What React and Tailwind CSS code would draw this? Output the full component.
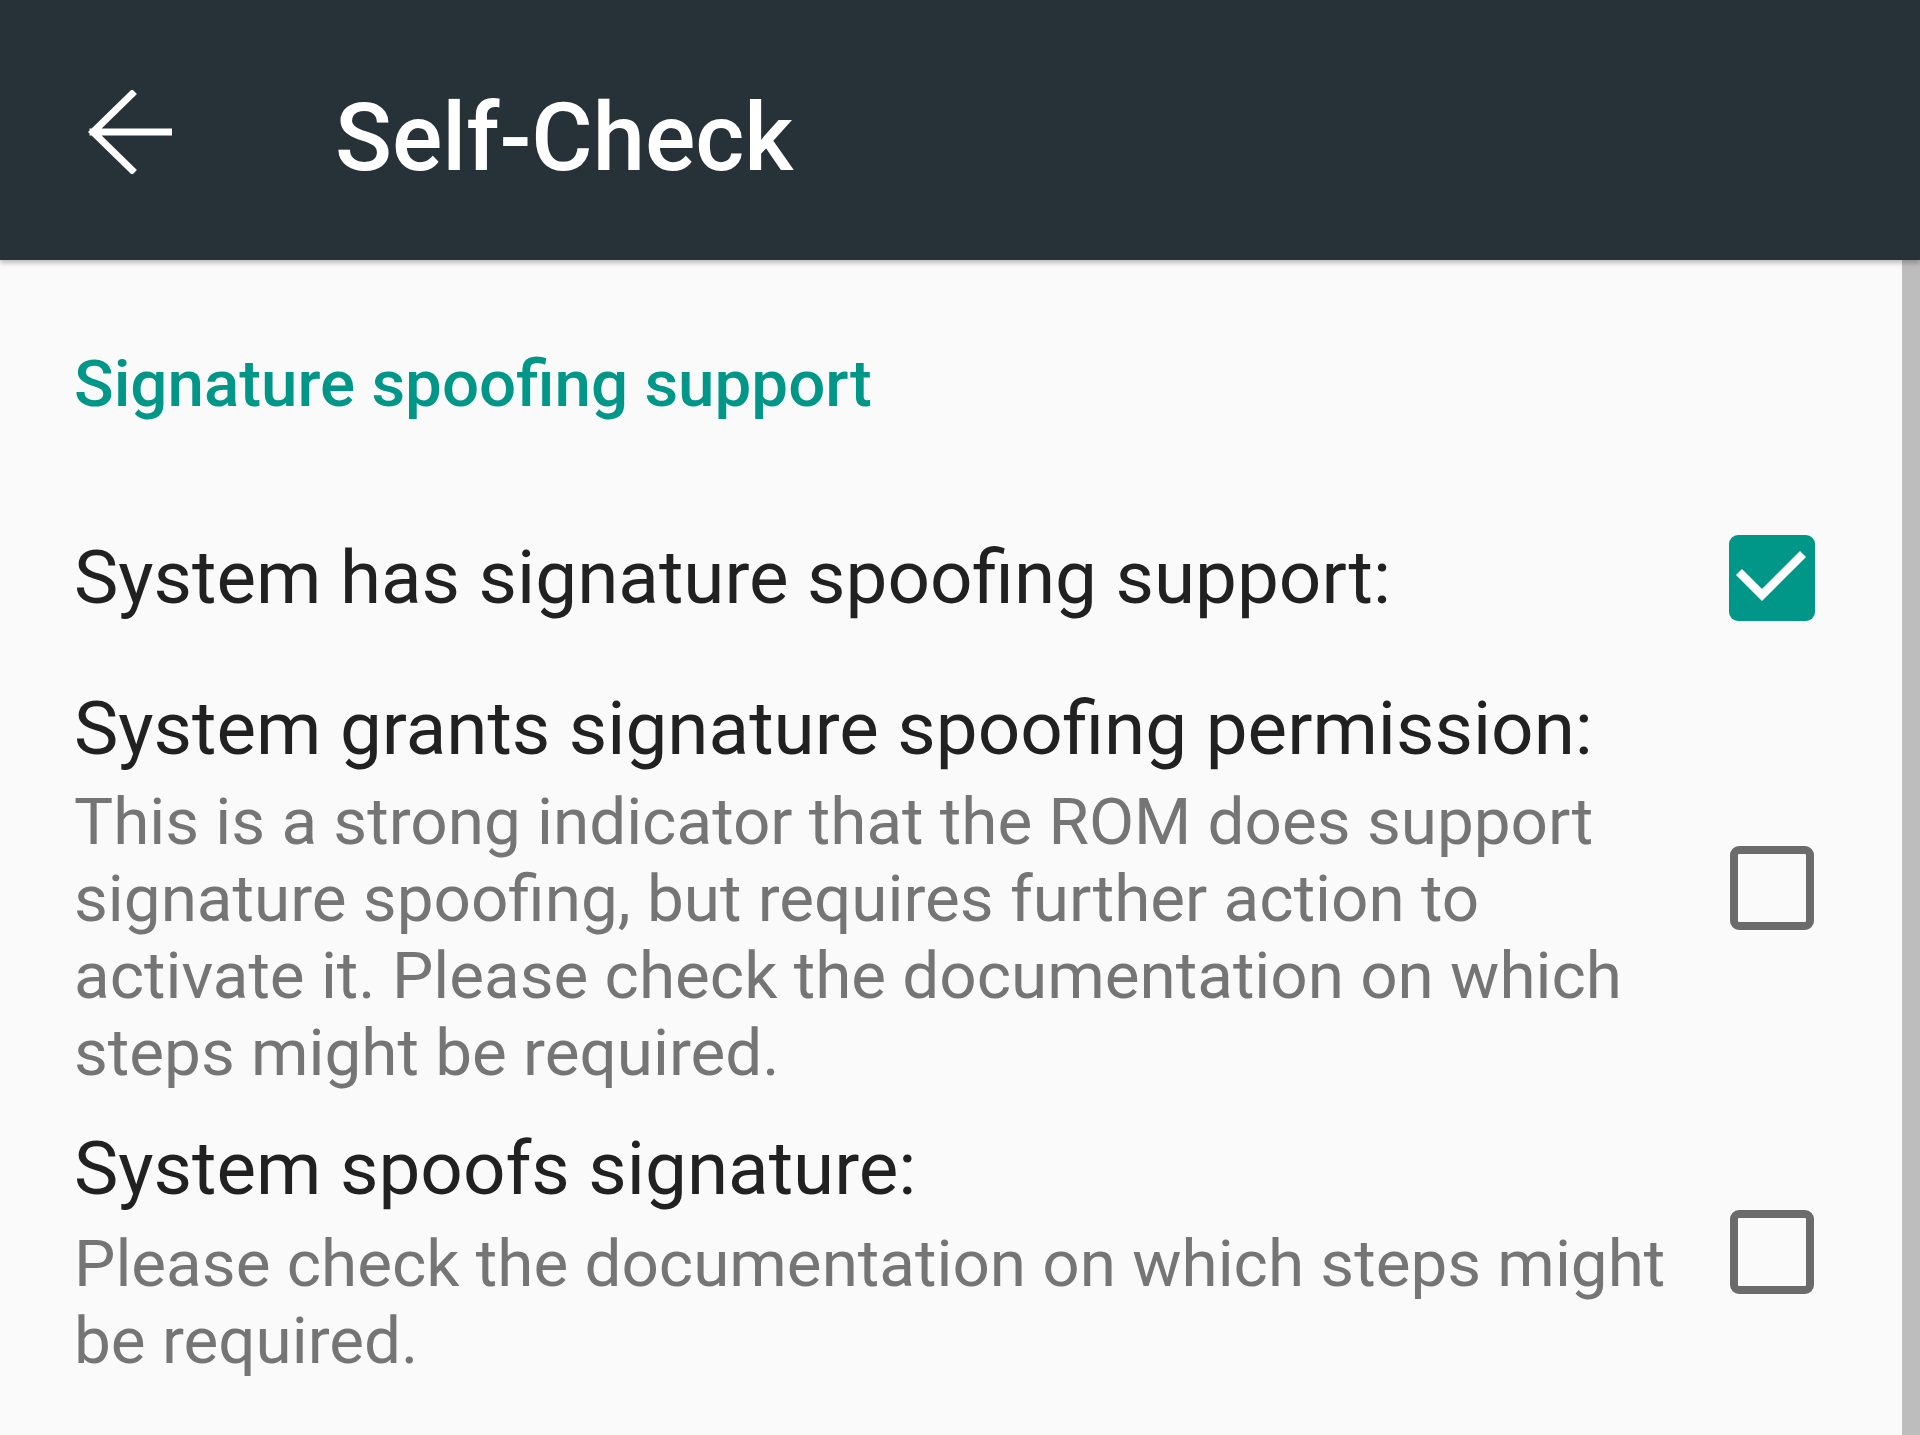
import React from "react";

function Checkbox({ checked }) {
  if (checked) {
    return (
      <div className="w-[86px] h-[86px] rounded-[9px] bg-[#009688] shrink-0 flex items-center justify-center">
        <svg width="86" height="86" viewBox="0 0 86 86">
          <path d="M13 40 L33 60 L71 22" fill="none" stroke="#ffffff" strokeWidth="8.5" strokeLinecap="square" />
        </svg>
      </div>
    );
  }
  return <div className="w-[84px] h-[84px] rounded-[9px] border-[8px] border-[#6b6b6b] shrink-0 mr-[1px]" />;
}

export default function App() {
  return (
    <div className="w-[1920px] h-[1435px] bg-[#fafafa] flex flex-col overflow-hidden" style={{ fontFamily: "Roboto, 'Noto Sans', sans-serif" }}>
      <div className="h-[260px] shrink-0 bg-[#263238] flex items-start shadow-[0_3px_5px_rgba(0,0,0,0.25)] relative z-10">
        <svg className="ml-[88px] mt-[90px] shrink-0" width="84" height="84" viewBox="0 0 84 84">
          <path d="M5 42 L82 42 M44 4 L5 42 L44 80" fill="none" stroke="#ffffff" strokeWidth="7" strokeLinecap="square" strokeLinejoin="miter" />
        </svg>
        <div className="ml-[163px] mt-[91px] text-white text-[94px] leading-none font-medium">Self-Check</div>
      </div>
      <div className="flex-1 flex flex-row">
        <div className="flex-1 flex flex-col pl-[74px] pr-[87px]">
          <div className="mt-[86px] text-[65.5px] leading-[75px] font-medium text-[#009688]">Signature spoofing support</div>

          <div className="mt-[113px] flex items-center">
            <div className="flex-1 text-[74.6px] leading-[88px] text-[#212121]">System has signature spoofing support:</div>
            <Checkbox checked />
          </div>

          <div className="mt-[63px] flex items-center gap-[48px]">
            <div className="flex-1 flex flex-col">
              <div className="text-[74.6px] leading-[88px] text-[#212121]">System grants signature spoofing permission:</div>
              <div className="mt-[10px] text-[65.6px] leading-[77px] text-[#757575]">
                This is a strong indicator that the ROM does support signature spoofing, but requires further action to activate it. Please check the documentation on which steps might be required.
              </div>
            </div>
            <Checkbox />
          </div>

          <div className="mt-[34px] flex items-center gap-[48px]">
            <div className="flex-1 flex flex-col">
              <div className="text-[74.6px] leading-[88px] text-[#212121]">System spoofs signature:</div>
              <div className="mt-[12px] text-[65.6px] leading-[77px] text-[#757575]">
                Please check the documentation on which steps might be required.
              </div>
            </div>
            <Checkbox />
          </div>
        </div>
        <div className="w-[18px] shrink-0 bg-[#bdbdbd]" />
      </div>
    </div>
  );
}
